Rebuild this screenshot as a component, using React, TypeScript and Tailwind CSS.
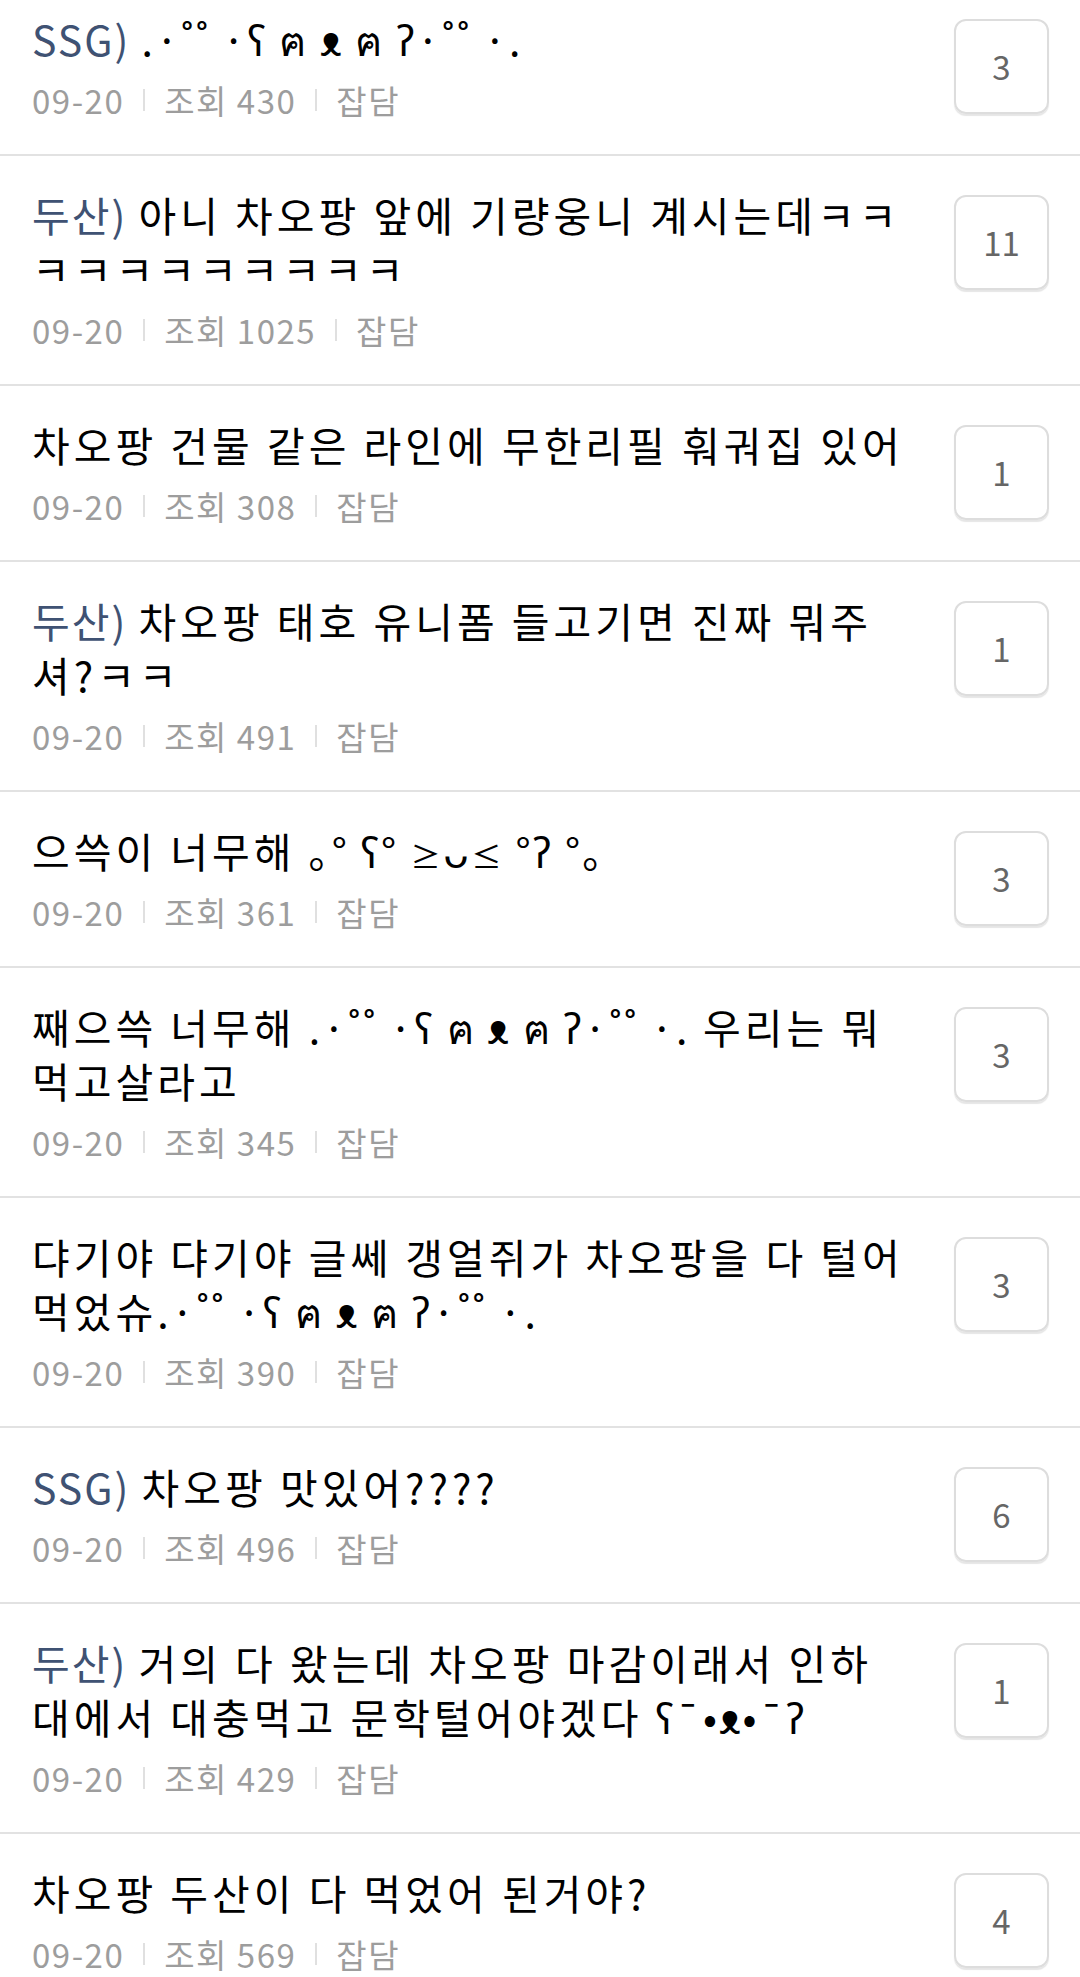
import type { ReactNode } from "react";

// kaomoji look a bit tighter than the hangul around them
function K({ children }: { children: ReactNode }) {
  return <span className="tracking-[2.5px]">{children}</span>;
}

const bear = ".·˚˚ ·ʕ ฅ ᴥ ฅ ʔ·˚˚ ·.";

type Post = { tag: string; lines: ReactNode[]; views: number; cmt: number };

const posts: Post[] = [
  { tag: "SSG)", lines: [<K>{bear}</K>], views: 430, cmt: 3 },
  { tag: "두산)", lines: ["아니 차오팡 앞에 기량웅니 계시는데ㅋㅋ", "ㅋㅋㅋㅋㅋㅋㅋㅋㅋ"], views: 1025, cmt: 11 },
  { tag: "", lines: ["차오팡 건물 같은 라인에 무한리필 훠궈집 있어"], views: 308, cmt: 1 },
  { tag: "두산)", lines: ["차오팡 태호 유니폼 들고기면 진짜 뭐주", "셔?ㅋㅋ"], views: 491, cmt: 1 },
  {
    tag: "",
    lines: [
      <>
        으쓱이 너무해{" "}
        <K>
          ｡° ʕ° <span className="text-[30px] leading-[0]">≥</span>ᴗ
          <span className="text-[30px] leading-[0]">≤</span> °ʔ °｡
        </K>
      </>,
    ],
    views: 361,
    cmt: 3,
  },
  { tag: "", lines: [<>째으쓱 너무해 <K>{bear}</K> 우리는 뭐</>, "먹고살라고"], views: 345, cmt: 3 },
  { tag: "", lines: ["댜기야 댜기야 글쎄 갱얼쥐가 차오팡을 다 털어", <>먹었슈<K>{bear}</K></>], views: 390, cmt: 3 },
  { tag: "SSG)", lines: ["차오팡 맛있어????"], views: 496, cmt: 6 },
  { tag: "두산)", lines: ["거의 다 왔는데 차오팡 마감이래서 인하", <>대에서 대충먹고 문학털어야겠다 <K>ʕ¯•ᴥ•¯ʔ</K></>], views: 429, cmt: 1 },
  { tag: "", lines: ["차오팡 두산이 다 먹었어 된거야?"], views: 569, cmt: 4 },
];

function Bar() {
  return <span className="mx-[19px] h-[22px] w-[2px] bg-[#e0e0e0]" />;
}

function Row({ p }: { p: Post }) {
  return (
    <div className="flex border-b-[2px] border-[#e2e2e2] pl-[32px] pr-[31px] pt-[31px] pb-[34px]">
      <div className="min-w-0 flex-1">
        <div className="whitespace-nowrap text-[41px] leading-[54px] tracking-[4px] text-black">
          {p.lines.map((l, i) => (
            <div key={i} className="h-[54px]">
              {i === 0 && p.tag && <span className="tracking-[2px] text-[#3f5273]">{p.tag} </span>}
              {l}
            </div>
          ))}
        </div>
        <div className="mt-[15px] flex items-center text-[33px] leading-[40px] tracking-[1.5px] text-[#9d9d9d]">
          <span>09-20</span>
          <Bar />
          <span>조회 {p.views}</span>
          <Bar />
          <span>잡담</span>
        </div>
      </div>
      <div className="ml-4 mt-[8px] flex h-[95px] w-[95px] shrink-0 items-center justify-center rounded-[12px] border-2 border-[#dddddd] text-[33px] text-[#666] shadow-[0_2px_1px_rgba(0,0,0,0.10)]">
        {p.cmt}
      </div>
    </div>
  );
}

export default function App() {
  return (
    <div className="h-[1977px] overflow-hidden bg-white font-['Noto_Sans_CJK_KR','Noto_Sans',sans-serif]">
      <div className="-mt-[20px]">
        {posts.map((p, i) => (
          <Row key={i} p={p} />
        ))}
      </div>
    </div>
  );
}
